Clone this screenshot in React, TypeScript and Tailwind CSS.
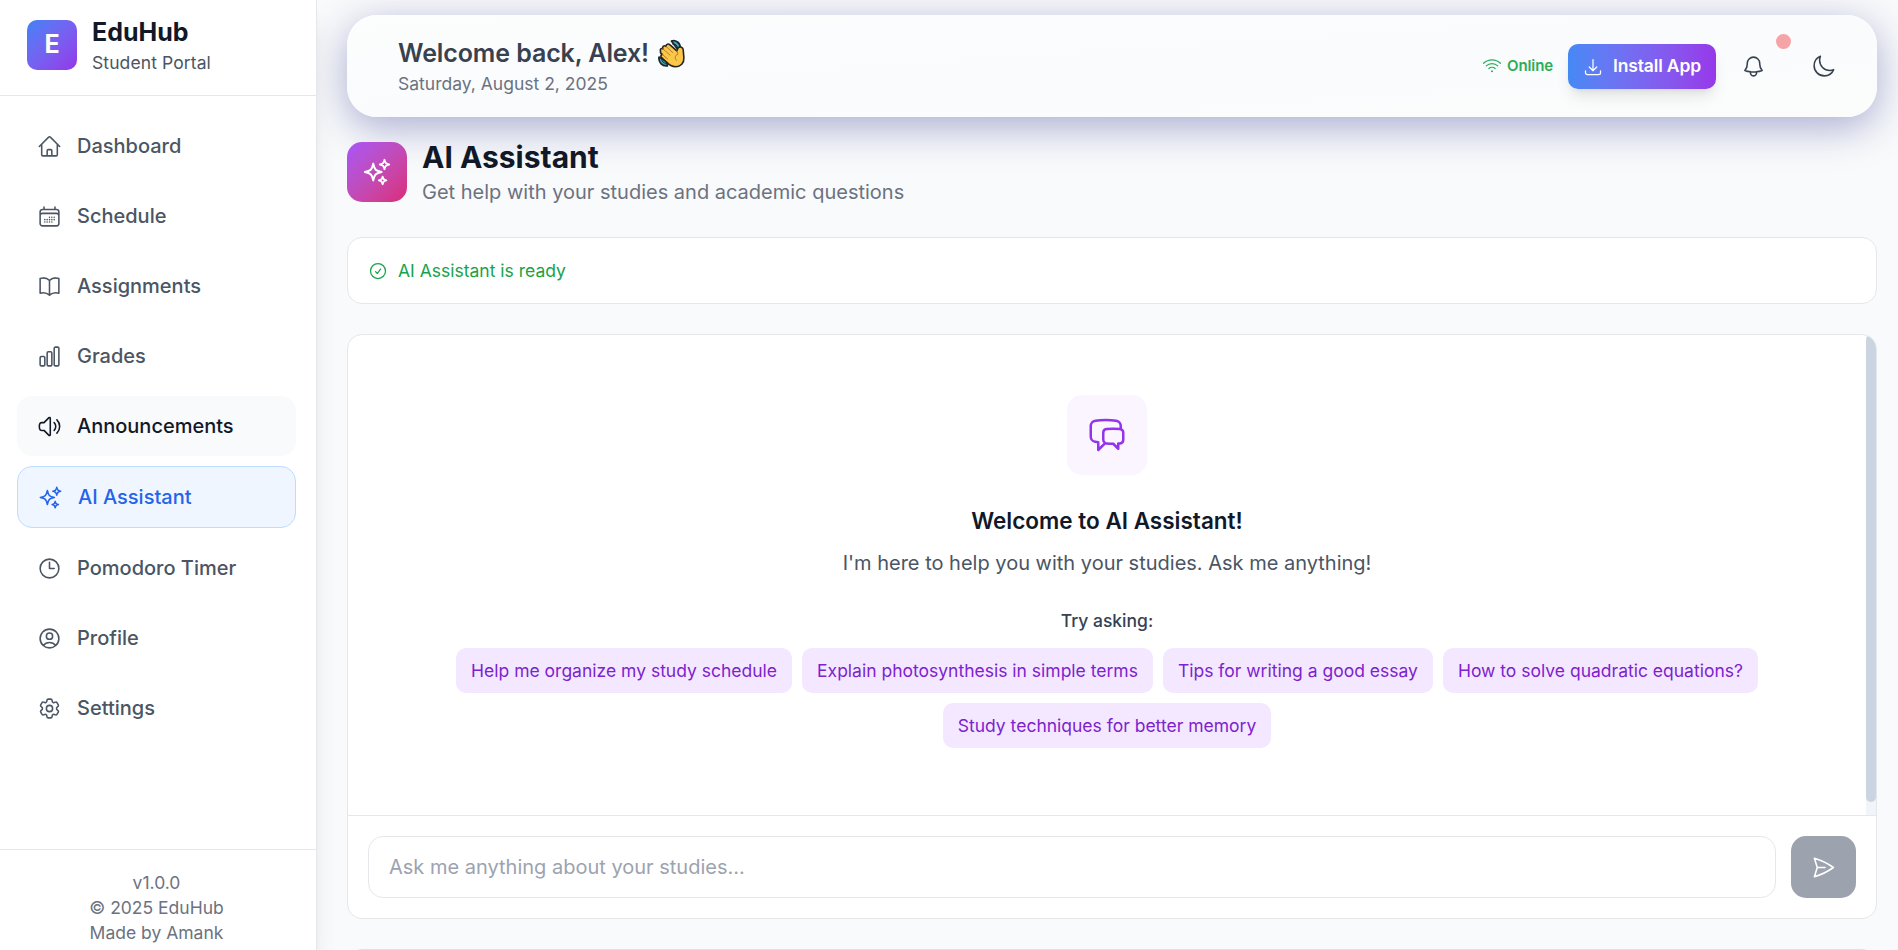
import type { ComponentType } from "react";
import {
  HiOutlineArrowDownTray,
  HiOutlineBell,
  HiOutlineBookOpen,
  HiOutlineCalendarDays,
  HiOutlineChartBar,
  HiOutlineChatBubbleLeftRight,
  HiOutlineCheckCircle,
  HiOutlineClock,
  HiOutlineCog6Tooth,
  HiOutlineHome,
  HiOutlineMoon,
  HiOutlinePaperAirplane,
  HiOutlineSparkles,
  HiOutlineSpeakerWave,
  HiOutlineUserCircle,
  HiOutlineWifi,
} from "react-icons/hi2";

type NavState = "idle" | "hover" | "active";

interface NavEntry {
  label: string;
  icon: ComponentType<{ className?: string }>;
  state: NavState;
}

const navigation: NavEntry[] = [
  { label: "Dashboard", icon: HiOutlineHome, state: "idle" },
  { label: "Schedule", icon: HiOutlineCalendarDays, state: "idle" },
  { label: "Assignments", icon: HiOutlineBookOpen, state: "idle" },
  { label: "Grades", icon: HiOutlineChartBar, state: "idle" },
  { label: "Announcements", icon: HiOutlineSpeakerWave, state: "hover" },
  { label: "AI Assistant", icon: HiOutlineSparkles, state: "active" },
  { label: "Pomodoro Timer", icon: HiOutlineClock, state: "idle" },
  { label: "Profile", icon: HiOutlineUserCircle, state: "idle" },
  { label: "Settings", icon: HiOutlineCog6Tooth, state: "idle" },
];

const navStyles: Record<NavState, string> = {
  idle: "text-[#4b5563]",
  hover: "bg-[#f9fafb] text-[#111827]",
  active: "border border-[#bfdbfe] bg-[#eff6ff] text-[#2563eb]",
};

const suggestions = [
  "Help me organize my study schedule",
  "Explain photosynthesis in simple terms",
  "Tips for writing a good essay",
  "How to solve quadratic equations?",
  "Study techniques for better memory",
];

function WavingHand() {
  return (
    <svg viewBox="0 0 27 28" className="-my-1 h-7 w-[27px] shrink-0" aria-hidden="true">
      <g fill="#3fa9c4" stroke="#20262a" strokeWidth="1.7" strokeLinejoin="round">
        <path d="M13.4 1.6C17.5-0.2 22.6 3.4 22.2 8.4L18.6 8.6Z" />
        <path d="M1 17.6C0.2 22.6 4 27 9.4 26.4L8.6 22Z" />
      </g>
      <g fill="none" stroke="#20262a" strokeWidth="1" strokeLinecap="round">
        <path d="M14.6 4.4C17 4 19.2 5.6 19.4 8" />
        <path d="M3.6 19.6C3.8 22.2 5.8 23.8 8 23.8" />
      </g>
      <path
        d="M2.6 11.8C1.6 10.2 3 8.4 4.8 9.2C4 7 6.2 5.4 8 6.8C8 4.6 10.4 3.8 12 5.4L18.8 11.4C19.2 10.4 19.6 9 20.6 8C22.2 6.6 25 7.8 25.2 10.2L25.9 18.4C26.2 23.6 22.6 27.2 17.6 27.2C13.8 27.2 11 25.4 8.8 22.8L3.6 18.2C2.2 16.8 3 14.8 4.4 15C2.8 14 2 13 2.6 11.8Z"
        fill="#fbc748"
        stroke="#262421"
        strokeWidth="1.6"
        strokeLinejoin="round"
      />
      <path
        d="M4.8 9.2L12 15.6M8 6.8L14.6 13M4.4 15L9.6 19.4M18.8 11.4L20 14.6C16.8 16 16.4 18.4 18.4 20.8"
        fill="none"
        stroke="#a8742a"
        strokeWidth="0.9"
        strokeLinecap="round"
      />
    </svg>
  );
}

function Sidebar() {
  return (
    <aside className="z-10 flex w-[317px] shrink-0 flex-col border-r border-[#e5e7eb] bg-white shadow-[0_20px_25px_-5px_rgba(0,0,0,0.1),0_8px_10px_-6px_rgba(0,0,0,0.1)]">
      <div className="flex items-center gap-[15px] border-b border-[#e5e7eb] pt-[15px] pb-4 pl-[27px]">
        <div className="flex size-10 items-center justify-center rounded-[10px] bg-linear-to-br from-[#3b82f6] to-[#9333ea] text-[25px] font-bold text-white">
          E
        </div>
        <div>
          <div className="text-[25px] leading-[35px] font-bold text-[#111827]">EduHub</div>
          <div className="text-[17.5px] leading-[25px] tracking-[0.1px] text-[#4b5563]">Student Portal</div>
        </div>
      </div>
      <nav className="flex flex-1 flex-col gap-2 py-4 pr-4 pl-[17px]">
        {navigation.map(({ label, icon: Icon, state }) => (
          <a
            key={label}
            className={`flex items-center gap-3 rounded-[15px] px-4 py-3 text-[20px] leading-[30px] font-medium ${navStyles[state]}`}
          >
            <Icon className="size-5" />
            {label}
          </a>
        ))}
      </nav>
      <footer className="border-t border-[#e5e7eb] pt-4 pr-4 pb-[5px] pl-[17px] text-center text-[17.5px] leading-[25px] text-[#6b7280]">
        <p>v1.0.0</p>
        <p>© 2025 EduHub</p>
        <p>Made by Amank</p>
      </footer>
    </aside>
  );
}

function TopBar() {
  return (
    <header className="flex h-[102px] shrink-0 items-center justify-between rounded-[30px] bg-linear-to-br from-[#fcfefd] via-[#fafbfd] to-[#fbfcfb] pr-[41px] pl-[51px] shadow-[0_10px_40px_rgba(31,38,135,0.37)]">
      <div>
        <h2 className="flex items-center gap-[9px] text-[25px] leading-[35px] font-semibold tracking-[-0.1px] text-[#384150]">
          Welcome back, Alex! <WavingHand />
        </h2>
        <p className="text-[17.5px] leading-[25px] text-[#6b7280]">Saturday, August 2, 2025</p>
      </div>
      <div className="flex items-center">
        <div className="mr-[15px] mb-px flex items-center gap-1 text-[15px] leading-5 font-semibold tracking-[-0.1px] text-[#2aae5a]">
          <HiOutlineWifi className="size-[20px]" />
          Online
        </div>
        <button className="mr-[25px] flex h-[45px] w-[148px] items-center gap-2 rounded-[10px] bg-linear-to-r from-[#4489f6] to-[#9637ea] pt-px pl-[15px] text-[17.5px] font-semibold tracking-[-0.15px] whitespace-nowrap text-white shadow-[0_10px_15px_-3px_rgba(0,0,0,0.1),0_4px_6px_-4px_rgba(0,0,0,0.1)]">
          <HiOutlineArrowDownTray className="size-[20px]" />
          Install App
        </button>
        <div className="relative mr-[45px] text-[#374151]">
          <HiOutlineBell className="size-5" />
          <span className="absolute -top-4 left-[35px] size-[15px] rounded-full bg-[#f5a3a4]" />
        </div>
        <HiOutlineMoon className="size-5 text-[#374151]" />
      </div>
    </header>
  );
}

function EmptyConversation() {
  return (
    <div className="flex h-[480px]">
      <div className="flex flex-1 flex-col items-center pt-[60px]">
        <div className="flex size-16 items-center justify-center rounded-[15px] bg-[#faf5ff] text-[#9333ea]">
          <HiOutlineChatBubbleLeftRight className="size-8" />
        </div>
        <h3 className="mt-[28px] text-[22.5px] leading-[35px] font-semibold text-[#111827]">
          Welcome to AI Assistant!
        </h3>
        <p className="mt-2 text-[20px] leading-[30px] text-[#4b5563]">
          I'm here to help you with your studies. Ask me anything!
        </p>
        <p className="mt-6 text-[17.5px] leading-[25px] font-medium text-[#374151]">Try asking:</p>
        <div className="mt-3 flex flex-wrap justify-center gap-2 px-4">
          {suggestions.map((text) => (
            <button
              key={text}
              className="rounded-[10px] bg-[#f3e8ff] px-3 py-2 text-[17.5px] leading-[25px] text-[#7e22ce]"
            >
              {text}
            </button>
          ))}
        </div>
      </div>
      <div className="w-2 bg-[#f1f5f9]">
        <div className="h-[467px] rounded-[5px] bg-[#cbd5e1]" />
      </div>
    </div>
  );
}

export default function App() {
  return (
    <div className="flex h-[950px] overflow-hidden bg-[#f9fafb] font-['Inter',sans-serif] antialiased [--spacing:5px]">
      <Sidebar />
      <main className="flex flex-1 flex-col overflow-hidden pt-3 pr-[21px] pl-6">
        <TopBar />
        <div className="mt-4 flex shrink-0 items-center gap-3">
          <div className="flex size-12 items-center justify-center rounded-[15px] bg-linear-to-br from-[#a855f7] to-[#db2777] text-white">
            <HiOutlineSparkles className="size-6" />
          </div>
          <div>
            <h1 className="text-[30px] leading-[40px] font-bold text-[#111827]">AI Assistant</h1>
            <p className="text-[20px] leading-[30px] text-[#6b7280]">
              Get help with your studies and academic questions
            </p>
          </div>
        </div>
        <div className="mt-6 flex shrink-0 items-center gap-2 rounded-[15px] border border-[#e5e7eb] bg-white p-4 text-[17.5px] leading-[25px] text-[#16a34a]">
          <HiOutlineCheckCircle className="size-4" />
          AI Assistant is ready
        </div>
        <section className="mt-6 shrink-0 overflow-hidden rounded-[15px] border border-[#e5e7eb] bg-white">
          <EmptyConversation />
          <form className="flex gap-3 border-t border-[#e5e7eb] p-4">
            <input
              className="min-w-0 flex-1 rounded-[15px] border border-[#e5e7eb] px-4 py-3 text-[20px] leading-[30px] placeholder:text-[#9ca3af]"
              placeholder="Ask me anything about your studies..."
            />
            <button
              type="button"
              aria-label="Send"
              className="flex w-[65px] items-center justify-center rounded-[15px] bg-[#9ca3af] text-white"
            >
              <HiOutlinePaperAirplane className="size-5" />
            </button>
          </form>
        </section>
        <div className="mt-6 h-20 shrink-0 rounded-[15px] border border-[#e9d5ff] bg-[#faf5ff]" />
      </main>
    </div>
  );
}
